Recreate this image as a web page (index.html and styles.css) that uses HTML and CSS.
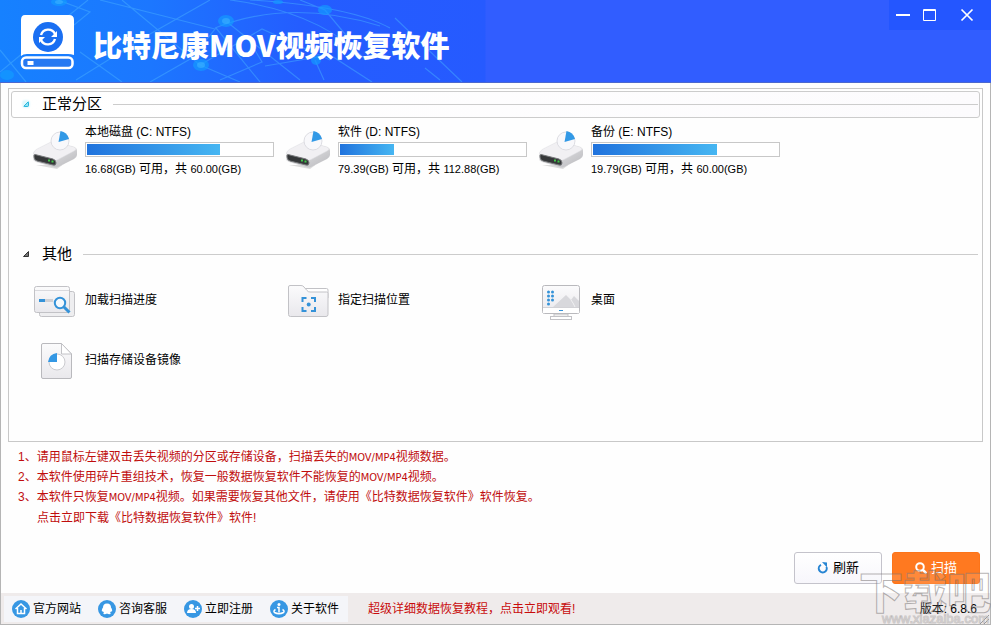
FILE: index.html
```html
<!DOCTYPE html>
<html lang="zh-CN">
<head>
<meta charset="utf-8">
<title>比特尼康MOV视频恢复软件</title>
<link rel="stylesheet" href="styles.css">
</head>
<body>
<svg class="defs" aria-hidden="true">
  <defs>
    <linearGradient id="metal" x1="0" y1="0" x2="0" y2="1"><stop offset="0" stop-color="#fbfbfc"/><stop offset="1" stop-color="#e9e8ec"/></linearGradient>
    <linearGradient id="side" x1="0" y1="0" x2="1" y2="1"><stop offset="0" stop-color="#f4f4f5"/><stop offset="1" stop-color="#b9b9bd"/></linearGradient>
    <symbol id="disk" viewBox="0 0 46 40">
      <path d="M4 35 L25 39 L44 25 L30 35Z" fill="#ddd"/>
      <path d="M1 24 Q1 22 4 20 L19 12 Q21 11 24 12 L42 17 Q45 18 45 21 L45 25 Q45 27 42 29 L26 37 Q24 38 21 37 L4 32 Q1 31 1 29Z" fill="url(#side)"/>
      <path d="M2 22 Q3 20 5 19 L19 12 Q21 11 24 12 L42 17 Q46 19 42 21 L27 29 Q24 31 21 30 L3 25 Q1 24 2 22Z" fill="#f1f0f3" stroke="#dedee2" stroke-width=".5"/>
      <path d="M2 25 Q3 24 5 25 L21 29 Q24 30 24 33 Q24 36 21 35 L5 31 Q2 30 2 27Z" fill="#353739" stroke="#77797b"/>
      <path d="M16 29.500h2v2h-2zM19.500 30.500h2v2h-2z" fill="#42c64a"/>
      <circle cx="28" cy="11" r="9" fill="#f8f8fb" stroke="#d6d6dc" stroke-width=".8"/>
      <path d="M26.500 12 L28.500 1 Q35 2 37 9Z" fill="#3299e6"/>
    </symbol>
  </defs>
</svg>
<header class="titlebar">
  <svg class="net" viewBox="0 0 486 82" preserveAspectRatio="xMinYMin slice" aria-hidden="true">
    <g fill="none" stroke="#45adff" stroke-opacity=".5" stroke-width="1.200">
      <path d="M0 72 L58 24 L88 0M58 0 L90 12 L58 38M0 50 L26 82M100 0 L215 29 L192 58 L150 82M80 52 L122 82M76 80 L150 34 L210 0M122 0 L200 65 L240 82M216 28 L260 82M227 22 L300 80M200 65 L262 29 L330 60M230 0 Q320 12 366 60M250 0 Q350 6 390 28M215 28 Q290 -2 380 26M220 80 L262 62 L250 42M265 66 L330 55 L372 82M315 60 L324 80M300 0 L325 10 L350 40M395 18 L462 82M425 68 L440 80"/>
    </g>
    <g fill="#129dff" fill-opacity=".65"><ellipse cx="59" cy="2" rx="8" ry="4"/><ellipse cx="226" cy="21" rx="8" ry="6"/><ellipse cx="201" cy="65" rx="8" ry="6"/><ellipse cx="7" cy="75" rx="7" ry="5"/><ellipse cx="325" cy="10" rx="7" ry="5"/><ellipse cx="316" cy="60" rx="5" ry="5"/><ellipse cx="278" cy="2" rx="5" ry="2"/></g>
    <g fill="#3db2ff" fill-opacity=".6"><ellipse cx="59" cy="2" rx="4" ry="2"/><ellipse cx="226" cy="21" rx="4" ry="3"/><ellipse cx="201" cy="65" rx="4" ry="3"/></g>
  </svg>
  <svg class="logo" viewBox="0 0 54 56" aria-hidden="true">
    <path d="M5 1H49Q54 1 54 6V41Q51 40 48 40H7Q3 40 1 42V6Q1 1 5 1Z" fill="#fff"/>
    <circle cx="28" cy="23" r="15" fill="#1a6ff2"/>
    <path d="M21 21a7.500 7.500 0 0 1 14-1M35 25a7.500 7.500 0 0 1-14 1" fill="none" stroke="#fff" stroke-width="2.400"/>
    <path d="M37 17v6h-6zM19 29v-6h6z" fill="#fff"/>
    <rect x="2" y="43.500" width="50.500" height="10.500" rx="4" fill="#2679f2" stroke="#fff" stroke-width="2.500"/>
    <rect x="7.500" y="47" width="6" height="4" fill="#fff"/>
  </svg>
  <h1 class="title">比特尼康<span class="title-latin">MOV</span>视频恢复软件</h1>
  <div class="window-buttons">
    <button type="button" aria-label="最小化"><svg viewBox="0 0 14 14"><path d="M0 7h14" stroke="#fff" stroke-width="2"/></svg></button>
    <button type="button" aria-label="最大化"><svg viewBox="0 0 14 14"><path d="M1.500 1.500h12v11h-12zM1.500 2.500h12" fill="none" stroke="#fff"/></svg></button>
    <button type="button" aria-label="关闭"><svg viewBox="0 0 14 14"><path d="M1.500 1.500l11 11M12.500 1.500l-11 11" stroke="#fff" stroke-width="1.700"/></svg></button>
  </div>
</header>
<main class="content">
  <div class="panel">
    <section class="group">
      <h2 class="group-head selected"><svg class="arrow" viewBox="0 0 6 6"><path d="M5.500 .5v5h-5z" fill="#8fe3f5" stroke="#27b5dc"/></svg>正常分区<span class="rule"></span></h2>
      <div class="disks">
        <button type="button" class="disk"><svg class="disk-icon"><use href="#disk"/></svg><span class="disk-info"><span>本地磁盘 (C: NTFS)</span><span class="bar"><span class="fill" style="width:72%"></span></span><span class="usage"><span>16.68(GB)</span> 可用，共 <span>60.00(GB)</span></span></span></button>
        <button type="button" class="disk"><svg class="disk-icon"><use href="#disk"/></svg><span class="disk-info"><span>软件 (D: NTFS)</span><span class="bar"><span class="fill" style="width:29%"></span></span><span class="usage"><span>79.39(GB)</span> 可用，共 <span>112.88(GB)</span></span></span></button>
        <button type="button" class="disk"><svg class="disk-icon"><use href="#disk"/></svg><span class="disk-info"><span>备份 (E: NTFS)</span><span class="bar"><span class="fill" style="width:67%"></span></span><span class="usage"><span>19.79(GB)</span> 可用，共 <span>60.00(GB)</span></span></span></button>
      </div>
    </section>
    <section class="group">
      <h2 class="group-head"><svg class="arrow" viewBox="0 0 6 6"><path d="M5.500 .5v5h-5z" fill="#777" stroke="#333"/></svg>其他<span class="rule"></span></h2>
      <div class="others">
        <button type="button" class="other"><svg class="other-icon" viewBox="0 0 44 40">
          <rect x="7.500" y="10.500" width="35" height="25" rx="2" fill="#eeeef0" stroke="#c2c2c6"/>
          <rect x="2.500" y="5.500" width="35" height="26" rx="2" fill="url(#metal)" stroke="#c2c2c6"/>
          <path d="M3 9.500h34" stroke="#d9d9dd"/><path d="M7 19.500h6" stroke="#3492d8" stroke-width="3"/><path d="M13 19.500h8" stroke="#d0d0d4" stroke-width="3"/>
          <circle cx="28" cy="22" r="5.200" fill="#f4f9fd" stroke="#3492d8" stroke-width="2"/><path d="M32 26l5.500 5.500" stroke="#3492d8" stroke-width="3"/></svg>加载扫描进度</button>
        <button type="button" class="other"><svg class="other-icon" viewBox="0 0 44 40">
          <path d="M20 7.500h21.500q1.500 0 1.500 1.500v8H20z" fill="#fff" stroke="#c2c2c6"/>
          <path d="M3.500 6Q3.500 4.500 5 4.500h11q2 0 3 1.500l3 3.500q1 1.500 3 1.500h16.500q1.500 0 1.500 1.500v21q0 2-2 2H5.500q-2 0-2-2z" fill="url(#metal)" stroke="#c2c2c6"/>
          <path d="M17.500 21v-4h4M26 17h4v4M30 26v4h-4M21.500 30h-4v-4" fill="none" stroke="#3492d8" stroke-width="2"/><circle cx="23.700" cy="23.500" r="2" fill="#3492d8"/></svg>指定扫描位置</button>
        <button type="button" class="other"><svg class="other-icon" viewBox="0 0 44 40">
          <path d="M16 33h14v3H16z" fill="#eee" stroke="#c2c2c6"/><rect x="12.500" y="35.500" width="21" height="3" fill="#fff" stroke="#c2c2c6"/>
          <rect x="4.500" y="4.500" width="37" height="28" rx="2" fill="url(#metal)" stroke="#b9b9bd"/>
          <path d="M15 26l13-12 5 5 3-4 5 5v6z" fill="#d8d8dc"/><path d="M33 19l2 3 2 4" fill="none" stroke="#f0f0f2"/><path d="M5 26.500h36" stroke="#d2d2d6"/><path d="M5 27h36v5H5z" fill="#fff"/><path d="M21 29.500h4" stroke="#3492d8"/>
          <path d="M10.500 11v13M14.500 11v9" stroke="#3492d8" stroke-width="3" stroke-linecap="round" stroke-dasharray="0 4"/></svg>桌面</button>
        <button type="button" class="other"><svg class="other-icon" viewBox="0 0 44 40">
          <path d="M11 2.500h18.500l10 10.500v23q0 1.500-1.500 1.500H11q-1.500 0-1.500-1.500V4q0-1.500 1.500-1.500z" fill="url(#metal)" stroke="#b9b9bd"/><path d="M29.500 2.500v10.500h10z" fill="#fff" stroke="#c2c2c6"/>
          <circle cx="25" cy="21" r="8" fill="#fff" stroke="#cbcbcf"/><path d="M25 21v-9q-8 1-9 9z" fill="#3498e4"/></svg>扫描存储设备镜像</button>
      </div>
    </section>
  </div>
  <div class="notes">
    <p>1、请用鼠标左键双击丢失视频的分区或存储设备，扫描丢失的<span class="latin">MOV/MP4</span>视频数据。</p>
    <p>2、本软件使用碎片重组技术，恢复一般数据恢复软件不能恢复的<span class="latin">MOV/MP4</span>视频。</p>
    <p>3、本软件只恢复<span class="latin">MOV/MP4</span>视频。如果需要恢复其他文件，请使用《比特数据恢复软件》软件恢复。</p>
    <p class="download"><a href="#">点击立即下载《比特数据恢复软件》软件!</a></p>
  </div>
  <div class="actions">
    <button type="button" class="action"><svg viewBox="0 0 12 12"><path d="M4 2.800A4 4 0 1 0 9.500 5" fill="none" stroke="#2785d3" stroke-width="2"/><path d="M5 0l5 .5v5z" fill="#2785d3"/></svg>刷新</button>
    <button type="button" class="action primary"><svg viewBox="0 0 12 12"><circle cx="5" cy="5" r="3.800" fill="none" stroke="#fff" stroke-width="2"/><path d="M7.500 7.500l4 4" stroke="#fff" stroke-width="2.500"/></svg>扫描</button>
  </div>
</main>
<footer class="footer">
  <nav class="links">
    <a href="#"><svg viewBox="0 0 18 18"><circle cx="9" cy="9" r="9" fill="#3797e3"/><path d="M3.500 9L9 4l5.500 5M5.500 8v5.500h7V8M9 13.500V10" fill="none" stroke="#fff" stroke-width="1.500"/></svg>官方网站</a>
    <a href="#"><svg viewBox="0 0 18 18"><circle cx="9" cy="9" r="9" fill="#3797e3"/><path d="M9 3.500c3 0 4 2 4 4 1 1.500 1.500 3 1 4-.5.500-1-.5-1-.5q0 1-1 1.500 1 .5.500 1.500-2 .5-3.500-.5-1.500 1-3.500.5-.5-1 .5-1.500-1-.5-1-1.500s-.5 1-1 .5c-.5-1 0-2.500 1-4 0-2 1-4 4-4z" fill="#fff"/></svg>咨询客服</a>
    <a href="#"><svg viewBox="0 0 18 18"><circle cx="9" cy="9" r="9" fill="#3797e3"/><circle cx="7.500" cy="6.500" r="2.500" fill="#fff"/><path d="M3 13q0-4 4.500-4t4.500 4z" fill="#fff"/><path d="M11 8.500h5M13.500 6v5" stroke="#fff" stroke-width="1.500"/></svg>立即注册</a>
    <a href="#"><svg viewBox="0 0 18 18"><circle cx="9" cy="9" r="9" fill="#3797e3"/><circle cx="9" cy="4.500" r="1.500" fill="#fff"/><path d="M7 7.500h2v5M5.500 9.500Q3 11 4.500 12.500 9 15 13.500 12.500 15 11 12.500 9.500" fill="none" stroke="#fff" stroke-width="1.500"/></svg>关于软件</a>
  </nav>
  <a class="tutorial" href="#">超级详细数据恢复教程，点击立即观看!</a>
  <span class="version">版本: 6.8.6</span>
  <svg class="grip" viewBox="0 0 10 10"><path d="M1 10l9-9M5 10l5-5" stroke="#999"/></svg>
</footer>
<div class="watermark" aria-hidden="true"><span class="mark-name">下载吧</span><span class="mark-url">www.xiazaiba.com</span></div>
</body>
</html>
```
FILE: styles.css
```css
* { box-sizing: border-box; }
body {
  margin: 0;
  min-height: 100vh;
  display: flex;
  flex-direction: column;
  position: relative;
  overflow-x: hidden;
  background: #fefefe;
  color: #000;
  font: 12px/20px "Liberation Sans", "Noto Sans CJK SC", sans-serif;
}
button { font: inherit; color: inherit; border: 0; background: none; padding: 0; text-align: left; }
a { color: inherit; text-decoration: none; }
h1, h2, p { margin: 0; font-weight: normal; }
.defs { position: absolute; width: 0; height: 0; }

.titlebar {
  position: relative;
  display: flex;
  align-items: flex-start;
  height: 83px;
  padding-left: 20px;
  background: linear-gradient(90deg, #1681ff 0, #1c77ff 150px, #245dff 300px, #265aff 485px, #315dff 486px);
  border-bottom: 1px solid #4b68cf;
}
.net { position: absolute; left: 0; top: 0; width: 486px; height: 82px; }
.logo { position: relative; width: 54px; height: 56px; margin-top: 14px; }
.title {
  position: relative;
  margin: 24px 0 0 19px;
  color: #fff;
  font: 900 29px/40px "Noto Sans CJK SC", sans-serif;
}
.window-buttons {
  display: flex;
  gap: 12px;
  margin-left: auto;
  height: 30px;
  padding: 0 17px 0 7px;
  background: #2456ff;
}
.window-buttons button { display: flex; align-items: center; width: 14px; height: 30px; }
.window-buttons button:last-child { margin-left: 12px; }
.window-buttons svg { width: 14px; height: 14px; }

.content {
  flex: 1;
  display: flex;
  flex-direction: column;
  padding: 5px 7px 9px;
  border: solid #b5b5b5;
  border-width: 0 1px;
}
.panel { border: 1px solid #c8c8c8; padding: 2px; }
.group { min-height: 150px; }
.group + .group { min-height: 198px; }
.group-head {
  display: flex;
  align-items: center;
  height: 27px;
  padding: 0 1px 2px 11px;
  border: 1px solid transparent;
  border-radius: 3px;
  font-size: 15px;
}
.selected { border-color: #ccc; background: linear-gradient(90deg, #fff, #fcfbfd); }
.selected .arrow { border-radius: 2px; background: #dff8fd; box-shadow: 0 0 2px 1px #dff8fd; }
.arrow { width: 6px; height: 6px; margin-right: 13px; }
.rule { flex: 1; height: 1px; margin: 2px 0 0 11px; background: #ccc; }

.disks, .others { display: grid; grid-template-columns: repeat(auto-fill, 253px); }
.disks { padding: 4px 0 0 21px; }
.disk { display: flex; gap: 7px; }
.disk-icon { width: 46px; height: 40px; margin-top: 8px; }
.disk-info { display: flex; flex-direction: column; width: 189px; }
.bar { height: 15px; border: 1px solid #c8c8c8; background: #fff; padding: 1px; }
.fill { display: block; height: 100%; background: linear-gradient(90deg, #2073dd, #46b6f2); }
.usage { margin-top: 2px; }
.usage span { font-size: 11px; }
.others { padding: 2px 0 0 21px; grid-auto-rows: 60px; }
.other { display: flex; align-items: center; gap: 9px; }
.other-icon { width: 44px; height: 40px; margin-top: 2px; }

.notes { padding: 5px 10px 0; color: #c00d0d; }
.notes p { height: 20px; }
.notes .download { height: 21px; padding: 1px 0 0 19px; }
.latin { font-family: "DejaVu Sans Condensed", "Liberation Sans", sans-serif; font-size: 11px; line-height: 16px; }

.actions { display: flex; justify-content: flex-end; gap: 10px; margin-top: auto; padding-right: 3px; }
.action {
  display: flex;
  align-items: center;
  justify-content: center;
  gap: 4px;
  width: 88px;
  height: 32px;
  border: 1px solid #c4c3cb;
  border-radius: 3px;
  background: linear-gradient(#fff, #f7f6fb);
  font-size: 13px;
}
.action svg { width: 12px; height: 12px; }
.primary { border-color: #fc7419; background: #ff7920; color: #fff; }

.footer {
  display: flex;
  align-items: center;
  height: 32px;
  padding: 0 1px 0 3px;
  background: #efebeb;
  border: solid #b5b5b5;
  border-width: 0 1px 1px;
}
.links { display: flex; gap: 17px; padding: 3px 9px 3px 8px; background: #f4f5f9; }
.links a { display: flex; align-items: center; gap: 3px; }
.links svg { width: 18px; height: 18px; }
.tutorial { margin-left: 20px; color: #c80b0b; }
.version { margin-left: auto; padding-right: 2px; }
.grip { width: 10px; height: 10px; align-self: flex-end; }

.watermark {
  position: absolute;
  right: 0;
  bottom: 0;
  display: flex;
  flex-direction: column;
  align-items: flex-end;
  pointer-events: none;
}
.mark-name {
  color: rgba(255, 255, 255, .12);
  font: 900 44px/46px "Noto Sans CJK SC", sans-serif;
  -webkit-text-stroke: 1px rgba(120, 115, 115, .55);
}
.mark-url {
  padding-right: 2px;
  color: rgba(255, 255, 255, .6);
  font-size: 13px;
  line-height: 12px;
  -webkit-text-stroke: 1px rgba(140, 135, 135, .4);
}
```
